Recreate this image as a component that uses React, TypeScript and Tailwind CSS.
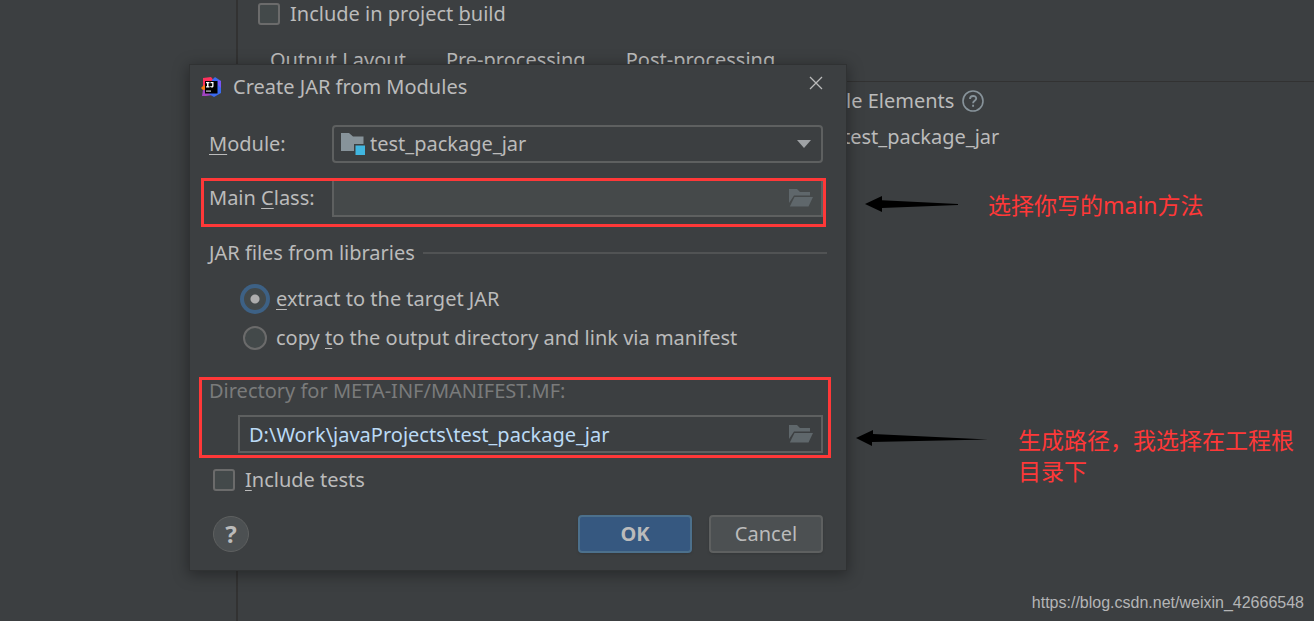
import { useState } from "react";

function FolderOpenIcon() {
  return (
    <svg width="24" height="18" viewBox="0 0 24 18" fill="#5f676b" aria-hidden="true">
      <path d="M0 0h8l3 3h10v3.500H5L0 14z" />
      <path d="M5.500 8H24l-4.500 9.500H.8z" />
    </svg>
  );
}

function ModuleIcon() {
  return (
    <svg width="24" height="22" viewBox="0 0 24 22" aria-hidden="true">
      <path d="M0 0h8l4 3.500h10.500V11H13v7H0z" fill="#87939a" />
      <path d="M14.500 12.500H24V22h-9.500z" fill="#40b6e0" />
    </svg>
  );
}

function IdeaLogo() {
  return (
    <svg width="20" height="20" viewBox="0 0 20 20" aria-hidden="true">
      <path d="M2 1l8-1 4 5-3 8-9-2z" fill="#fe315d" />
      <path d="M0 11l3-3 4 4-2 4z" fill="#f97a12" />
      <path d="M1 19l1-6 8-1 2 6-7 1z" fill="#a044c0" />
      <path d="M11 3l3-3 6 4v12l-7 4-5-3z" fill="#3b6bf0" />
      <path d="M17 3l3 1v7l-3-3z" fill="#7a54f5" />
      <rect x="4" y="4" width="12.500" height="12.500" fill="#000" />
      <path d="M5 5h3.500v1.200h-1v3h1v1.300H5V9.200h1v-3H5zM9.500 5h3v4c0 1-.7 1.600-1.700 1.600-.8 0-1.300-.3-1.800-.8l.8-.9c.6.6 1.400.4 1.400-.3V6.200H9.500z" fill="#fff" />
      <path d="M5 13.500h5v1.200H5z" fill="#ccc" />
    </svg>
  );
}

const checkboxClass =
  "appearance-none size-[22px] shrink-0 rounded-[3px] border-2 border-[#6b6b6b] bg-[#43494a] checked:bg-[#6b6b6b]";
const mnemonic = "underline decoration-1 underline-offset-3";

function BrowseField({
  id,
  label,
  value,
  onChange,
  className,
}: {
  id: string;
  label: string;
  value: string;
  onChange: (value: string) => void;
  className: string;
}) {
  return (
    <div className={`flex h-[38px] min-w-0 flex-1 items-center border-2 border-[#5e6060] ${className}`}>
      <input
        id={id}
        aria-label={label}
        value={value}
        onChange={(e) => onChange(e.target.value)}
        className="h-full min-w-0 flex-1 bg-transparent px-[9px] text-[#bbdaf5] outline-none"
      />
      <button type="button" aria-label="Browse" className="mr-2">
        <FolderOpenIcon />
      </button>
    </div>
  );
}

function JarDialog() {
  const [mainClass, setMainClass] = useState("");
  const [directory, setDirectory] = useState("D:\\Work\\javaProjects\\test_package_jar");
  const [mode, setMode] = useState("extract");

  const radioClass =
    "appearance-none size-6 mx-[3px] shrink-0 rounded-full border-2 border-[#6b6b6b] bg-[#43494a] checked:size-[22px] checked:mx-1 checked:border-[#43494a] checked:bg-[radial-gradient(circle,#adadad_0_4px,#43494a_5px)] checked:ring-4 checked:ring-[#3d6185]";

  return (
    <form
      role="dialog"
      aria-labelledby="dialog-title"
      onSubmit={(e) => e.preventDefault()}
      className="absolute left-[190px] top-[65px] w-[656px] bg-[#3c3f41] pb-[17px] shadow-[0_3px_14px_2px_rgba(0,0,0,0.35)] outline outline-[#303233]"
    >
      <header className="flex h-11 items-center pl-[11px] pr-[23px]">
        <IdeaLogo />
        <h1 id="dialog-title" className="ml-3 flex-1">
          Create JAR from Modules
        </h1>
        <button type="button" aria-label="Close" className="-mt-2">
          <svg width="14" height="14" viewBox="0 0 14 14" stroke="#bbb" strokeWidth="1.300">
            <path d="M1 1l12 12M13 1L1 13" />
          </svg>
        </button>
      </header>

      <div className="px-[19px] pt-4">
        <div className="flex items-center pr-1">
          <label htmlFor="module" className="w-[123px]">
            <span className={mnemonic}>M</span>odule:
          </label>
          <div className="relative flex-1">
            <select
              id="module"
              className="h-[38px] w-full appearance-none rounded border-2 border-[#5e6060] bg-[#3c3f41] pl-9"
            >
              <option>test_package_jar</option>
            </select>
            <span className="pointer-events-none absolute inset-y-0 left-[9px] right-3 flex items-center justify-between">
              <ModuleIcon />
              <svg width="14" height="8" viewBox="0 0 14 8" fill="#9fa2a5" aria-hidden="true">
                <path d="M0 0h14L7 8z" />
              </svg>
            </span>
          </div>
        </div>

        <div className="relative mt-4 flex items-center pr-1">
          <label htmlFor="main-class" className="w-[123px]">
            Main <span className={mnemonic}>C</span>lass:
          </label>
          <BrowseField
            id="main-class"
            label="Main Class"
            value={mainClass}
            onChange={setMainClass}
            className="bg-[#45494a]"
          />
          <span className="pointer-events-none absolute -bottom-[10px] -left-2 -top-px right-px border-3 border-[#ff3838]" />
        </div>

        <fieldset className="mt-[22px]">
          <legend className="flex h-7 w-full items-center gap-2">
            JAR files from libraries
            <span className="h-0.5 flex-1 bg-[#515354]" />
          </legend>
          <div className="mt-[18px] flex flex-col gap-[11px] pl-[31px]">
            <label className="flex h-7 items-center gap-[6px]">
              <input
                type="radio"
                name="mode"
                className={radioClass}
                checked={mode === "extract"}
                onChange={() => setMode("extract")}
              />
              <span>
                <span className={mnemonic}>e</span>xtract to the target JAR
              </span>
            </label>
            <label className="flex h-7 items-center gap-[6px]">
              <input
                type="radio"
                name="mode"
                className={radioClass}
                checked={mode === "copy"}
                onChange={() => setMode("copy")}
              />
              <span>
                copy <span className={mnemonic}>t</span>o the output directory and link via manifest
              </span>
            </label>
          </div>
        </fieldset>

        <div className="relative mt-[25px]">
          <label htmlFor="directory" className="flex h-7 items-center text-[#7a7b7b]">
            Directory for META-INF/MANIFEST.MF:
          </label>
          <div className="mt-[10px] flex pl-[29px] pr-1">
            <BrowseField
              id="directory"
              label="Directory"
              value={directory}
              onChange={setDirectory}
              className="bg-[#3c3f41]"
            />
          </div>
          <span className="pointer-events-none absolute -bottom-[5px] -left-[10px] -right-1 top-0 border-3 border-[#ff3838]" />
        </div>

        <label className="mt-[13px] flex h-7 items-center gap-[10px] pl-1">
          <input type="checkbox" className={checkboxClass} />
          <span>
            <span className={mnemonic}>I</span>nclude tests
          </span>
        </label>

        <div className="mt-[21px] flex items-center pl-1 pr-1">
          <button
            type="button"
            aria-label="Help"
            className="mr-auto size-9 rounded-full border border-[#5e6060] bg-[#4c5052] text-2xl font-bold leading-none"
          >
            ?
          </button>
          <button
            type="submit"
            className="h-[38px] w-[114px] rounded border-2 border-[#4c708c] bg-[#365880] font-bold shadow"
          >
            OK
          </button>
          <button
            type="button"
            className="ml-[17px] h-[38px] w-[114px] rounded border-2 border-[#5e6060] bg-[#4c5052] shadow"
          >
            Cancel
          </button>
        </div>
      </div>
    </form>
  );
}

export default function App() {
  return (
    <div className="relative flex min-h-screen overflow-hidden bg-[#3c3f41] font-['Noto_Sans','Noto_Sans_CJK_SC',sans-serif] text-[20px] leading-7 text-[#bbbbbb]">
      <aside className="w-[238px] shrink-0 border-r-2 border-[#323232]" />

      <main className="min-w-0 flex-1">
        <label className="flex h-[27px] items-center gap-[10px] pl-5">
          <input type="checkbox" className={checkboxClass} />
          <span>
            Include in project <span className={mnemonic}>b</span>uild
          </span>
        </label>
        <nav className="mt-[19px] flex h-9 gap-10 border-b border-[#323232] pl-8">
          <a href="#layout">Output Layout</a>
          <a href="#pre">Pre-processing</a>
          <a href="#post">Post-processing</a>
        </nav>
        <section className="flex flex-col gap-2 pl-[540px] pt-[5px]">
          <h2 className="flex items-center gap-2">
            Available Elements
            <svg width="22" height="22" viewBox="0 0 22 22" fill="none" stroke="#87939a" strokeWidth="1.600" aria-hidden="true">
              <circle cx="11" cy="11" r="10" />
              <path d="M8 9c0-4 6.200-4 6.200-.4 0 2.200-3.100 2.300-3.100 4.600M11.100 14.800v2" strokeWidth="1.900" />
            </svg>
          </h2>
          <p className="pl-[65px]">test_package_jar</p>
        </section>
      </main>

      <JarDialog />

      <svg className="absolute left-[865px] top-[196px]" width="94" height="16" viewBox="0 0 94 16" aria-hidden="true">
        <path d="M0 8L17 0v4.300L93 8v1L17 12v4z" />
      </svg>
      <p className="absolute left-[988px] top-[190px] text-[23px] leading-[31px] text-[#ff3838]">
        选择你写的main方法
      </p>
      <svg className="absolute left-[856px] top-[430px]" width="132" height="16" viewBox="0 0 132 16" aria-hidden="true">
        <path d="M0 8L17 0v4L132 9.500 16 12v4z" />
      </svg>
      <p className="absolute left-[1018px] top-[425px] w-[280px] text-[23px] leading-[31px] text-[#ff3838]">
        生成路径，我选择在工程根目录下
      </p>
      <a
        href="https://blog.csdn.net/weixin_42666548"
        className="absolute bottom-[6px] right-[10px] font-['Liberation_Sans',sans-serif] text-base leading-6 text-[#b4b5b6]"
      >
        https://blog.csdn.net/weixin_42666548
      </a>
    </div>
  );
}
